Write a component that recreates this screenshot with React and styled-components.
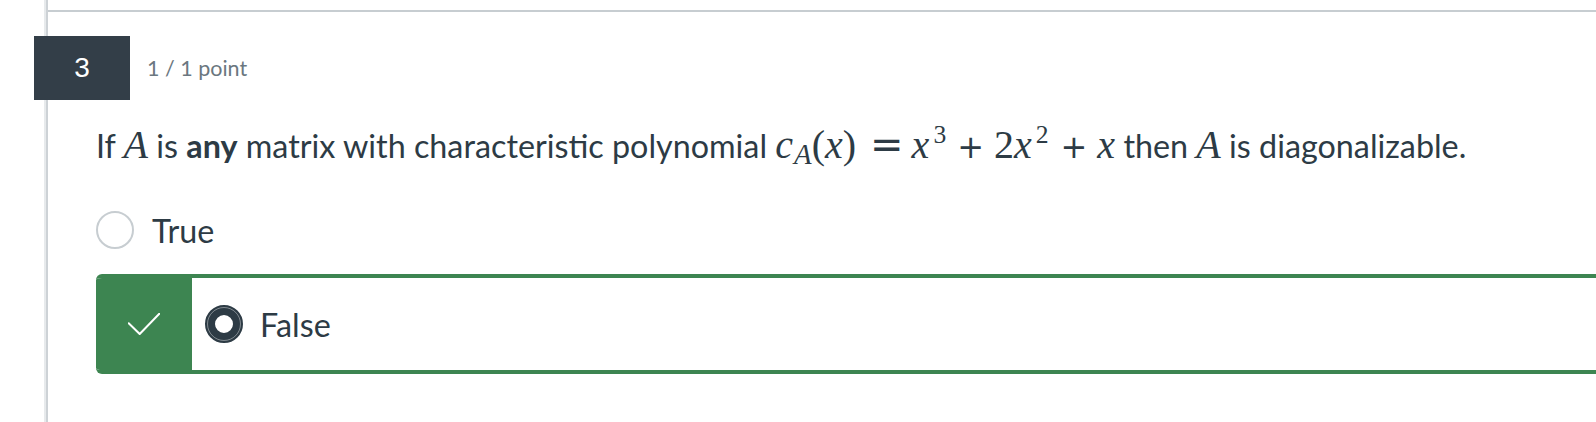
import React from "react";
import styled, { createGlobalStyle } from "styled-components";

const Global = createGlobalStyle`
  html, body { margin: 0; padding: 0; background: #fff; overflow: hidden; }
  body { font-family: Lato, "Noto Sans", sans-serif; color: #2d3b45; }
`;

const Page = styled.div`
  display: flex;
  height: 422px;
  padding-left: 44px;
  box-sizing: border-box;
`;

const Rail = styled.div`
  flex: 0 0 4px;
  background: linear-gradient(to right, #e7eaec 0 2px, #cdd2d6 2px 4px);
`;

const Main = styled.div`
  flex: 1;
  min-width: 0;
  display: flex;
  flex-direction: column;
`;

const Divider = styled.div`
  margin-top: 10px;
  height: 2px;
  background: #c7cdd1;
`;

const Header = styled.div`
  display: flex;
  align-items: center;
  gap: 17px;
  margin-top: 24px;
  margin-left: -14px;
`;

const NumberBadge = styled.div`
  width: 96px;
  height: 64px;
  background: #333e48;
  color: #fff;
  display: flex;
  align-items: center;
  justify-content: center;
  font-family: "Liberation Sans", Arial, sans-serif;
  font-size: 28px;
`;

const Points = styled.span`
  font-size: 21.5px;
  color: #6b7780;
`;

const Body = styled.div`
  padding-left: 48px;
  display: flex;
  flex-direction: column;
`;

const Question = styled.p`
  margin: 22px 0 0;
  height: 48px;
  font-size: 32.3px;
  line-height: 48px;
  white-space: nowrap;
`;

const Strong = styled.strong`
  font-weight: 700;
`;

const MathWrap = styled.span`
  font-family: "Liberation Serif", "Times New Roman", serif;
  font-size: 40px;
  line-height: 0;
  white-space: nowrap;
`;

const Var = styled.span`
  font-style: italic;
`;

const Op = styled.span`
  font-family: "DejaVu Sans", sans-serif;
  font-size: ${(p) => p.$size}px;
  line-height: 0;
  margin: 0 ${(p) => p.$right}px 0 ${(p) => p.$left}px;
`;

const Sup = styled.span`
  font-size: 0.64em;
  vertical-align: 0.58em;
  line-height: 0;
  margin-left: 4px;
`;

const Sub = styled.span`
  font-size: 0.72em;
  font-style: italic;
  vertical-align: -0.22em;
  line-height: 0;
  margin-left: 1px;
`;

const Option = styled.div`
  display: flex;
  align-items: center;
  gap: 18px;
  height: 48px;
  margin-top: 36px;
  font-size: 32.3px;
`;

const Radio = styled.span`
  position: relative;
  flex: none;
  width: 38px;
  height: 38px;
  box-sizing: border-box;
  border-radius: 50%;
  background: #fff;
  border: ${(p) => (p.$checked ? "10px solid #2d3b45" : "2px solid #c7cdd1")};
  &::before {
    content: "";
    display: ${(p) => (p.$checked ? "block" : "none")};
    position: absolute;
    inset: -8px;
    border-radius: 50%;
    border: 1px solid rgba(255, 255, 255, 0.4);
  }
`;

const CorrectBox = styled.div`
  display: flex;
  height: 100px;
  box-sizing: border-box;
  margin-top: 20px;
  border: 4px solid #3d8551;
  border-left: 0;
  border-right: 0;
  border-radius: 6px 0 0 6px;
  overflow: hidden;
`;

const CheckCell = styled.div`
  flex: 0 0 96px;
  background: #3d8551;
  display: flex;
  align-items: center;
  justify-content: center;
`;

const AnswerBody = styled.div`
  display: flex;
  align-items: center;
  gap: 17px;
  padding-left: 13px;
  font-size: 32.3px;
`;

export default function App() {
  return (
    <>
      <Global />
      <Page>
        <Rail />
        <Main>
          <Divider />
          <Header>
            <NumberBadge>3</NumberBadge>
            <Points>1 / 1 point</Points>
          </Header>
          <Body>
            <Question>
              If <MathWrap><Var>A</Var></MathWrap> is <Strong>any</Strong> matrix with
              characteristic polynomial{" "}
              <MathWrap>
                <Var>c</Var>
                <Sub>A</Sub>
                <span>(</span>
                <Var>x</Var>
                <span>)</span>
                <Op $size={40} $left={14} $right={8}>=</Op>
                <Var>x</Var>
                <Sup>3</Sup>
                <Op $size={32} $left={11} $right={10}>+</Op>
                <span>2</span>
                <Var>x</Var>
                <Sup>2</Sup>
                <Op $size={32} $left={12} $right={10}>+</Op>
                <Var>x</Var>
              </MathWrap>{" "}
              then <MathWrap><Var>A</Var></MathWrap> is diagonalizable.
            </Question>
            <Option>
              <Radio />
              <span>True</span>
            </Option>
            <CorrectBox>
              <CheckCell>
                <svg width="32" height="22" viewBox="0 0 32 22" fill="none">
                  <polyline
                    points="0.7,10.2 11.7,21 31.3,0.7"
                    stroke="#fff"
                    strokeWidth="2"
                    strokeLinecap="round"
                    strokeLinejoin="round"
                  />
                </svg>
              </CheckCell>
              <AnswerBody>
                <Radio $checked />
                <span>False</span>
              </AnswerBody>
            </CorrectBox>
          </Body>
        </Main>
      </Page>
    </>
  );
}
